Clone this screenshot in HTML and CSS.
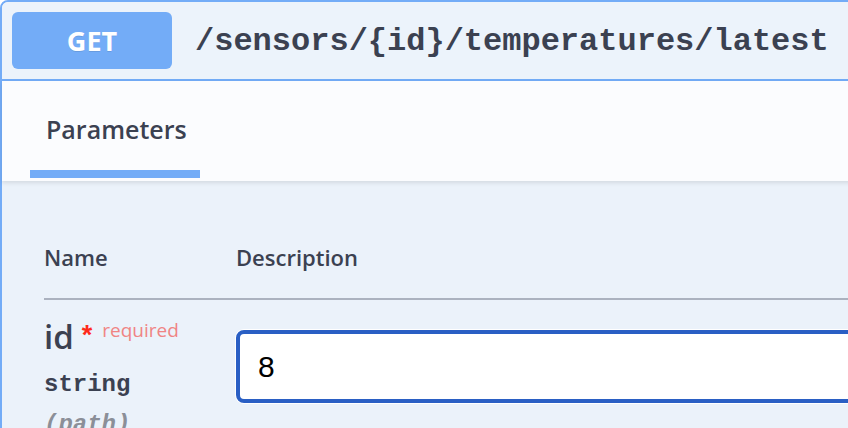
FILE: index.html
```html
<!DOCTYPE html>
<html>
<head>
<meta charset="utf-8">
<link rel="stylesheet" href="styles.css">
</head>
<body>
<div class="opblock">
  <div class="summary">
    <span class="method">GET</span>
    <span class="path">/sensors/{id}/temperatures/latest</span>
  </div>
  <div class="section-header">
    <div class="tab">
      <span class="tab-label">Parameters</span>
      <span class="tab-bar"></span>
    </div>
  </div>
  <div class="params">
    <div class="thead">
      <div class="col-name">Name</div>
      <div class="col-desc">Description</div>
    </div>
    <div class="prow">
      <div class="col-name">
        <div class="pname"><span class="pid">id</span><span class="star">*</span><span class="req">required</span></div>
        <div class="ptype">string</div>
        <div class="pin">(path)</div>
      </div>
      <div class="col-desc">
        <input class="field" type="text" value="8">
      </div>
    </div>
  </div>
</div>
</body>
</html>
```

FILE: styles.css
```css
html, body {
  margin: 0;
  padding: 0;
  background: #ffffff;
  overflow: hidden;
}
body {
  width: 848px;
  height: 428px;
  font-family: "Open Sans", "Noto Sans", sans-serif;
  color: #3b4151;
}
.opblock {
  width: 1100px;
  border: 2px solid #73acf7;
  border-radius: 8px 8px 0 0;
  background: #ebf2fa;
}
.summary {
  display: flex;
  align-items: center;
  padding: 10px;
  background: #ecf3fb;
  border-bottom: 2px solid #73acf7;
  border-radius: 6px 6px 0 0;
}
.method {
  width: 160px;
  height: 57px;
  display: flex;
  align-items: center;
  justify-content: center;
  background: #73acf7;
  color: #ffffff;
  border-radius: 6px;
  font-weight: 700;
  font-size: 27px;
  text-shadow: 0 1px 0 rgba(0,0,0,0.1);
}
.path {
  margin-left: 23px;
  margin-top: 2px;
  font-family: "Liberation Mono", monospace;
  font-weight: 700;
  font-size: 32px;
  color: #3b4151;
}
.section-header {
  position: relative;
  height: 100px;
  box-sizing: border-box;
  padding: 30px 0 0 28px;
  background: #fbfcfe;
  box-shadow: 0 2px 4px rgba(0,0,0,0.1);
}
.tab {
  display: inline-flex;
  flex-direction: column;
}
.tab-label {
  padding-left: 16px;
  font-size: 25px;
  font-weight: 600;
  line-height: 36px;
}
.tab-bar {
  margin-top: 23px;
  width: 170px;
  height: 8px;
  background: #73acf7;
}
.params {
  padding: 0 0 0 42px;
}
.thead {
  display: flex;
  padding-top: 62px;
  padding-bottom: 26px;
  border-bottom: 2px solid #abb2bf;
  font-size: 22px;
  font-weight: 600;
  line-height: 29px;
}
.col-name {
  width: 192px;
  flex: none;
}
.col-desc {
  flex: 1;
}
.prow {
  display: flex;
  padding-top: 10px;
}
.pname {
  line-height: 40px;
  white-space: nowrap;
}
.pid {
  font-size: 33px;
  font-weight: 600;
}
.star {
  font-family: "Liberation Sans", sans-serif;
  font-weight: 700;
  font-size: 27px;
  color: #ff2a1a;
  margin-left: 8px;
  vertical-align: 5px;
}
.req {
  font-size: 19px;
  color: #f08484;
  margin-left: 10px;
  vertical-align: 12px;
}
.ptype {
  margin-top: 7px;
  font-family: "Liberation Mono", monospace;
  font-weight: 700;
  font-size: 24px;
  line-height: 30px;
}
.pin {
  margin-top: 10px;
  font-family: "Liberation Mono", monospace;
  font-weight: 700;
  font-style: italic;
  font-size: 24px;
  line-height: 30px;
  color: #8b8f98;
}
.field {
  display: block;
  margin-top: 20px;
  width: 700px;
  height: 73px;
  box-sizing: border-box;
  border: 4px solid #2a5fc4;
  border-radius: 8px;
  background: #ffffff;
  padding: 0 18px;
  font-family: "Liberation Sans", sans-serif;
  font-size: 30px;
  color: #000000;
  outline: none;
  box-shadow: 0 0 0 1px #ffffff;
}
```
